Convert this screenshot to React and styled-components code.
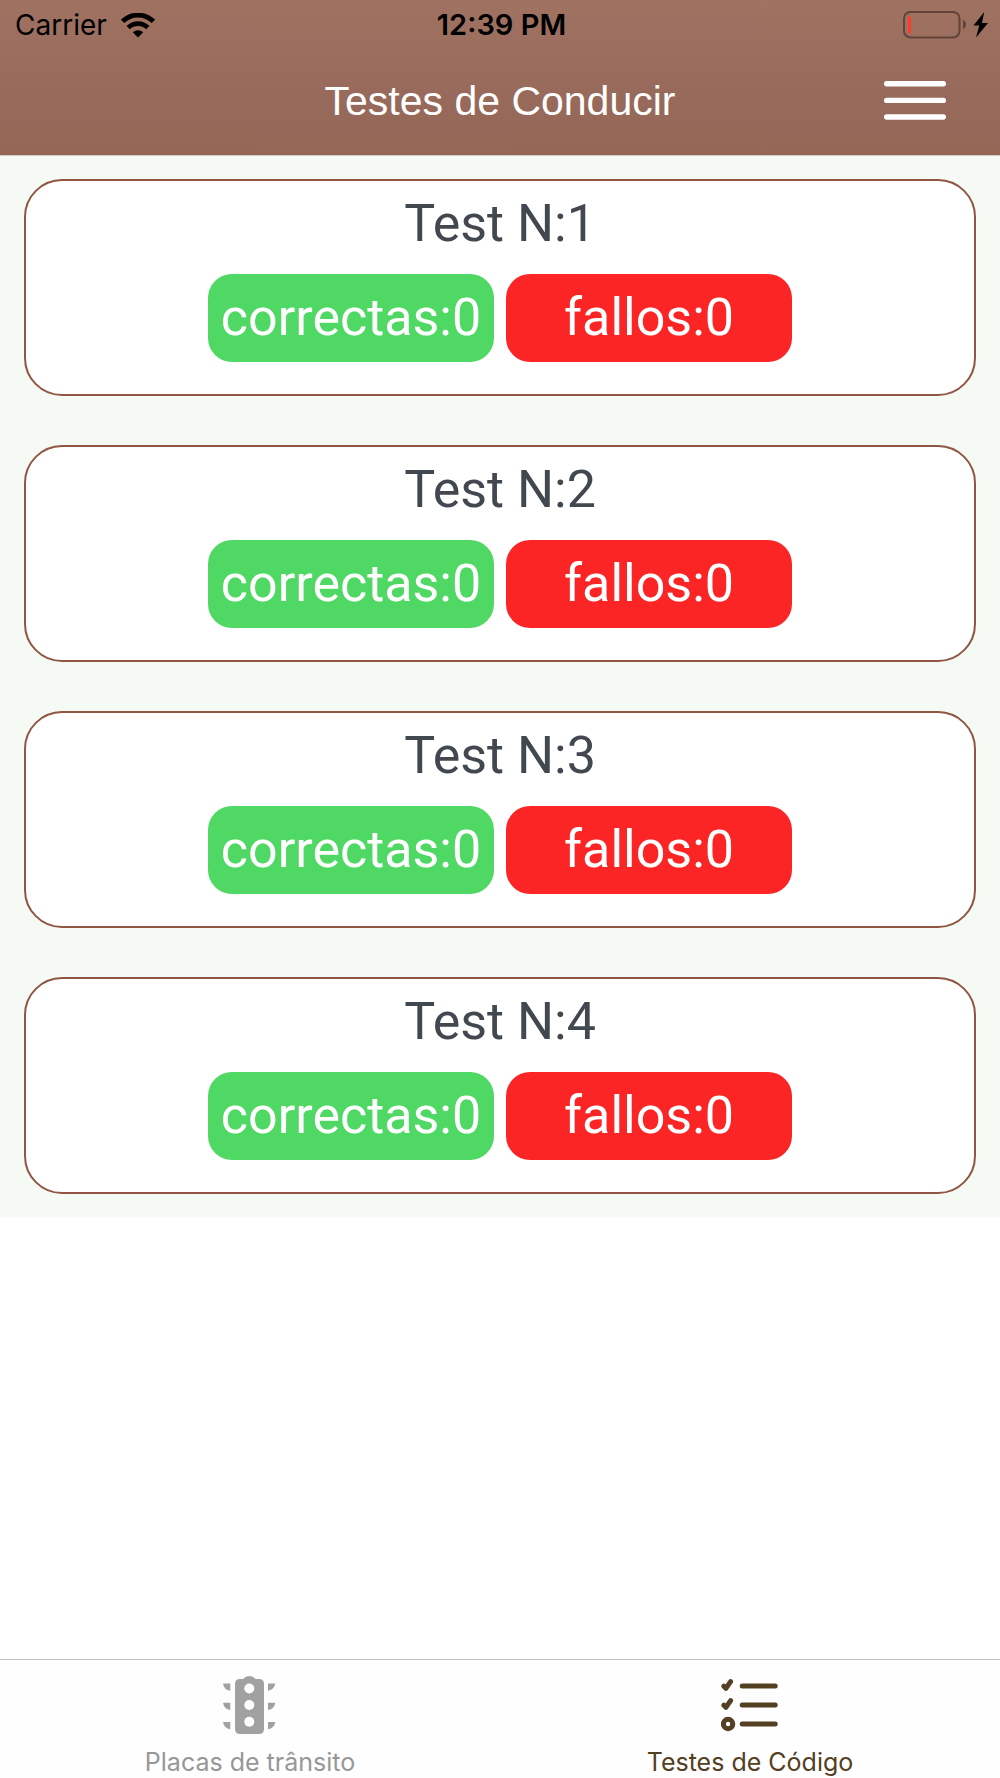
import React from "react";
import styled, { createGlobalStyle } from "styled-components";

const GlobalStyle = createGlobalStyle`
  * { box-sizing: border-box; }
  body {
    margin: 0;
    background: #ffffff;
    font-family: Inter, "Liberation Sans", sans-serif;
  }
  button { font: inherit; color: inherit; cursor: pointer; }
`;

const Screen = styled.div`
  display: flex;
  flex-direction: column;
  min-height: 100vh;
`;

const Header = styled.header`
  display: flex;
  flex-direction: column;
  background: linear-gradient(#a07262, #976a5b 60%, #946757);
  border-bottom: 1px solid #d5cfcb;
`;

const StatusBar = styled.div`
  display: grid;
  grid-template-columns: 1fr auto 1fr;
  align-items: center;
  height: 50px;
  padding: 0 12px 0 15px;
  font-size: 28px;
  line-height: 32px;
  color: #000000;
`;

const Carrier = styled.div`
  display: flex;
  align-items: center;
  gap: 14px;
`;

const Clock = styled.time`
  font-size: 29px;
  font-weight: 600;
`;

const Power = styled.div`
  display: flex;
  justify-content: flex-end;
`;

const NavBar = styled.div`
  display: grid;
  grid-template-columns: 1fr auto 1fr;
  align-items: center;
  height: 105px;
  padding: 0 54px 4px;
`;

const Title = styled.h1`
  grid-column: 2;
  margin: 0;
  font-family: "Liberation Sans", Arial, sans-serif;
  font-size: 41px;
  font-weight: 400;
  line-height: 48px;
  color: #ffffff;
`;

const MenuButton = styled.button`
  display: flex;
  justify-self: end;
  padding: 0;
  border: 0;
  background: none;
`;

const Main = styled.main`
  flex: 1;
`;

const TestList = styled.ul`
  display: flex;
  flex-direction: column;
  gap: 49px;
  margin: 0;
  padding: 23px 24px;
  list-style: none;
  background: #f5faf4;
`;

const TestCard = styled.button`
  display: flex;
  flex-direction: column;
  align-items: center;
  gap: 18px;
  width: 100%;
  padding: 11px 24px 32px;
  border: 2px solid #905643;
  border-radius: 38px;
  background: #ffffff;
  font-family: Roboto, "Liberation Sans", sans-serif;
  font-size: 52px;
`;

const TestName = styled.span`
  line-height: 64px;
  color: #42484f;
`;

const Scores = styled.span`
  display: flex;
  justify-content: center;
  gap: 12px;
`;

const Score = styled.span`
  width: 286px;
  border-radius: 24px;
  background: ${({ $tone }) => ($tone === "good" ? "#4fd964" : "#fb2525")};
  line-height: 88px;
  text-align: center;
  color: #ffffff;
`;

const TabBar = styled.nav`
  display: flex;
  border-top: 1px solid #c3c3c3;
  background: #fefefe;
`;

const Tab = styled.a`
  display: flex;
  flex: 1;
  flex-direction: column;
  align-items: center;
  gap: 12px;
  padding: 16px 0 0;
  font-size: 25px;
  line-height: 32px;
  text-decoration: none;
  color: ${({ $active }) => ($active ? "#533f22" : "#979797")};
`;

function WifiIcon() {
  return (
    <svg width="34" height="25" viewBox="0 0 34 25" aria-hidden="true">
      <g fill="none" stroke="#000" strokeWidth="4.8">
        <path d="M1.6 8.4a22 22 0 0 1 30.8 0" />
        <path d="M7.2 14.6a14 14 0 0 1 19.6 0" />
      </g>
      <path d="M17 24.5l-5.2-5.2a7.5 7.5 0 0 1 10.4 0z" />
    </svg>
  );
}

function BatteryIcon() {
  return (
    <svg width="85" height="28" viewBox="0 0 85 28" aria-hidden="true">
      <rect x="1" y="0.9" width="55.5" height="25.5" rx="6.5" fill="none" stroke="#604439" strokeWidth="2" />
      <rect x="5" y="5" width="3" height="17.5" rx="1.5" fill="#ff3b30" />
      <path d="M60 8.500q3 2 3 5t-3 5z" fill="#604439" />
      <path d="M81.200 1L70.500 14.500h5.800L73 26.500l12-14.600h-6z" />
    </svg>
  );
}

function MenuIcon() {
  return (
    <svg width="62" height="40" viewBox="0 0 62 40" aria-hidden="true">
      <path d="M2.700 2.700h56.600M2.700 19.400h56.600M2.700 36h56.600" stroke="#fff" strokeWidth="5.400" strokeLinecap="round" />
    </svg>
  );
}

function TrafficLightIcon() {
  return (
    <svg width="58" height="58" viewBox="1 0 58 58" aria-hidden="true">
      <g fill="#a1a1a1">
        <path d="M19 3h4q2.500-3 6.300-3t6.300 3H39q5 0 5 5v45q0 5-5 5H20q-5 0-5-5V8q0-5 5-5z" />
        <path d="M3 7.500h7.300v7.300Q4 14 3 7.500zM3 26.700h7.300V34Q4 33 3 26.700zM3 45.900h7.300v7.300Q4 52 3 45.900z" />
        <path d="M55.300 7.500H48v7.300q6.300-1 7.300-7.300zM55.300 26.700H48V34q6.300-1 7.300-7.300zM55.300 45.900H48v7.300q6.300-1 7.300-7.300z" />
      </g>
      <g fill="#fefefe">
        <circle cx="29.300" cy="12.500" r="5" />
        <circle cx="29.300" cy="29" r="5" />
        <circle cx="29.300" cy="45.800" r="5" />
      </g>
    </svg>
  );
}

function ChecklistIcon() {
  return (
    <svg width="58" height="58" viewBox="1 0 58 58" aria-hidden="true">
      <g fill="none" stroke="#533f22" strokeWidth="5" strokeLinecap="round" strokeLinejoin="round">
        <path d="M22.200 10h33M22.200 29h33M22.200 48h33" />
        <path d="M3.900 10.200l2 2.200L10.600 5.600M3.900 29.200l2 2.200 4.700-6.800" />
        <circle cx="8.100" cy="48" r="4.700" />
      </g>
    </svg>
  );
}

const tests = [
  { number: 1, correct: 0, failed: 0 },
  { number: 2, correct: 0, failed: 0 },
  { number: 3, correct: 0, failed: 0 },
  { number: 4, correct: 0, failed: 0 },
];

export default function App() {
  return (
    <Screen>
      <GlobalStyle />
      <Header>
        <StatusBar>
          <Carrier>
            <span>Carrier</span>
            <WifiIcon />
          </Carrier>
          <Clock>12:39 PM</Clock>
          <Power>
            <BatteryIcon />
          </Power>
        </StatusBar>
        <NavBar>
          <Title>Testes de Conducir</Title>
          <MenuButton type="button" aria-label="Menu">
            <MenuIcon />
          </MenuButton>
        </NavBar>
      </Header>
      <Main>
        <TestList>
          {tests.map((test) => (
            <li key={test.number}>
              <TestCard type="button">
                <TestName>{`Test N:${test.number}`}</TestName>
                <Scores>
                  <Score $tone="good">{`correctas:${test.correct}`}</Score>
                  <Score $tone="bad">{`fallos:${test.failed}`}</Score>
                </Scores>
              </TestCard>
            </li>
          ))}
        </TestList>
      </Main>
      <TabBar>
        <Tab href="#placas">
          <TrafficLightIcon />
          <span>Placas de trânsito</span>
        </Tab>
        <Tab href="#testes" $active aria-current="page">
          <ChecklistIcon />
          <span>Testes de Código</span>
        </Tab>
      </TabBar>
    </Screen>
  );
}
